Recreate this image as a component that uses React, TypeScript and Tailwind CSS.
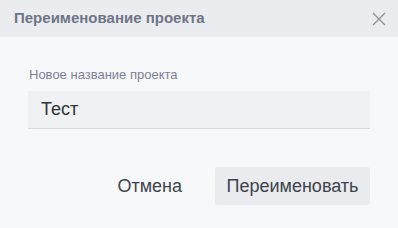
export default function App() {
  return (
    <div className="w-[398px] h-[228px] bg-[#f7f8fa] flex flex-col font-['Liberation_Sans',Arial,sans-serif]">
      <div className="h-[37px] bg-[#ebecf0] flex items-center justify-between pl-[14px] pr-[12px]">
        <span className="text-[15px] font-bold text-[#6e7587]">Переименование проекта</span>
        <svg width="14" height="14" viewBox="0 0 14 14" fill="none" stroke="#8c909a" strokeWidth="1.3">
          <path d="M1 1 L13 13 M13 1 L1 13" />
        </svg>
      </div>
      <div className="flex flex-col px-[28px] pt-[30px]">
        <label className="text-[13px] text-[#7b8196] pl-px leading-[15px]">Новое название проекта</label>
        <div className="mt-[9px] h-[38px] bg-[#f0f1f3] border-b border-[#d9dadd] flex items-center px-[13px]">
          <span className="text-[18px] text-[#2f3237]">Тест</span>
        </div>
        <div className="flex justify-end items-center mt-[38px] gap-[15px]">
          <button className="h-[38px] px-[18px] text-[18px] text-[#3d434c]">Отмена</button>
          <button className="h-[38px] w-[155px] rounded-[3px] bg-[#eaebee] text-[18px] text-[#3d434c]">Переименовать</button>
        </div>
      </div>
    </div>
  );
}
